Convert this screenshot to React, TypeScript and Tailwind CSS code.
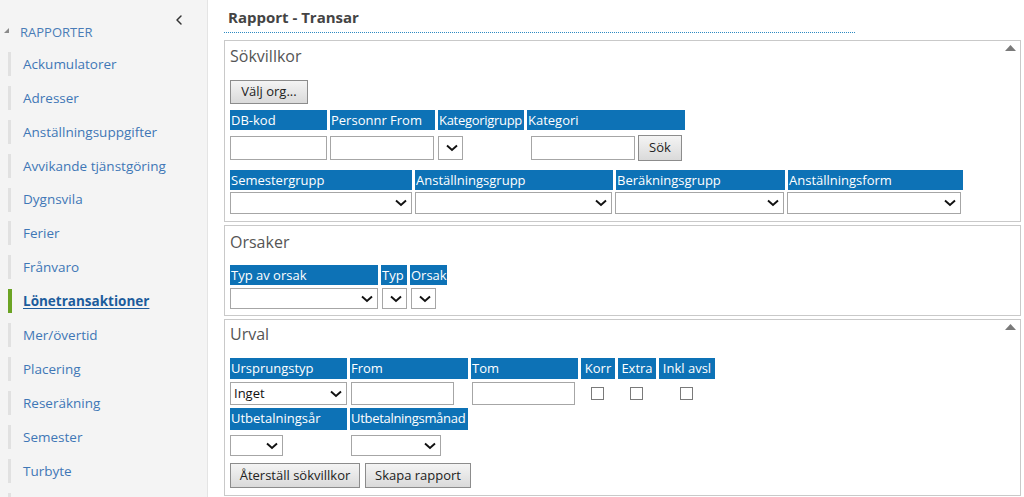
import { ChevronLeft } from "lucide-react"

const navItems = [
  "Ackumulatorer",
  "Adresser",
  "Anställningsuppgifter",
  "Avvikande tjänstgöring",
  "Dygnsvila",
  "Ferier",
  "Frånvaro",
  "Lönetransaktioner",
  "Mer/övertid",
  "Placering",
  "Reseräkning",
  "Semester",
  "Turbyte",
  "",
]

function Chevron() {
  return (
    <svg width="12" height="8" viewBox="0 0 12 8" className="shrink-0">
      <path d="M1 1.5 L6 6 L11 1.5" fill="none" stroke="#111" strokeWidth="1.9" />
    </svg>
  )
}

function Select({ w, value }: { w: string; value?: string }) {
  return (
    <div
      className={`${w} h-full bg-white border border-[#a6a6a6] flex items-center justify-between pl-[3px] pr-[4px] text-[13px] text-[#111]`}
    >
      <span>{value}</span>
      <Chevron />
    </div>
  )
}

function Input({ w }: { w: string }) {
  return <div className={`${w} h-full bg-white border border-[#a6a6a6]`} />
}

function Head({ w, label, center, tight }: { w: string; label: string; center?: boolean; tight?: boolean }) {
  return (
    <div
      className={`${w} h-full bg-[#0d72b6] text-white text-[13px] leading-[20px] whitespace-nowrap ${center ? "text-center" : "pl-[1px]"} ${tight ? "tracking-[-0.3px]" : ""}`}
    >
      {label}
    </div>
  )
}

function Btn({ label, w }: { label: string; w: string }) {
  return (
    <div
      className={`${w} h-full flex items-center justify-center border border-[#8c8c8c] bg-gradient-to-b from-[#f4f4f4] to-[#dadada] text-[13px] text-[#222]`}
    >
      {label}
    </div>
  )
}

function Check() {
  return <div className="w-[13px] h-[13px] border border-[#7a7a7a] bg-white" />
}

function Panel({ title, pt, pb, children, collapse }: { title: string; pt: string; pb: string; children: React.ReactNode; collapse?: boolean }) {
  return (
    <div className={`relative border border-[#c9c9c9] pl-[5px] ${pt} ${pb}`}>
      {collapse && (
        <svg width="11" height="6" viewBox="0 0 11 6" className="absolute right-[4px] top-[4px]">
          <path d="M0 6 L5.5 0 L11 6 Z" fill="#7a7a7a" />
        </svg>
      )}
      <div className="text-base leading-[24px] text-[#555]">{title}</div>
      {children}
    </div>
  )
}

export default function App() {
  return (
    <div className="flex h-[497px] overflow-hidden bg-white" style={{ fontFamily: '"Open Sans", "Noto Sans", sans-serif' }}>
      {/* Sidebar */}
      <aside className="w-[208px] shrink-0 bg-[#f4f4f4] border-r border-[#e4e4e4]">
        <div className="flex justify-between items-start">
          <div className="flex items-center pt-[23px] pl-[4px] h-[41px]">
            <svg width="5" height="5" viewBox="0 0 5 5" className="mt-[-4px]">
              <path d="M5 0 L5 5 L0 5 Z" fill="#8a8a8a" />
            </svg>
            <span className="ml-[11px] text-[13px] leading-[18px] text-[#4a7cb7]">RAPPORTER</span>
          </div>
          <div className="pt-[12px] pr-[20px]">
            <ChevronLeft size={16} strokeWidth={2.2} color="#333" />
          </div>
        </div>
        <ul className="mt-[11px] pl-[8px]">
          {navItems.map((item, i) => {
            const active = item === "Lönetransaktioner"
            return (
              <li
                key={i}
                className={`h-[24px] mb-[9.9px] flex items-center text-[13.5px] ${
                  active
                    ? "border-l-[4px] border-[#6ba323] font-bold text-[#1c5c9c] underline underline-offset-2 pl-[11px]"
                    : "border-l-[3px] border-[#e1e1e1] text-[#3f77b6] pl-[12px]"
                }`}
              >
                {item}
              </li>
            )
          })}
        </ul>
      </aside>

      {/* Main */}
      <main className="flex-1 pl-[16px] pr-[3px]">
        <div className="w-[631px] pt-[7px] pb-[5px] border-b border-dotted border-[#2d8ac2]">
          <h1 className="pl-[4px] text-[15px] leading-[20px] font-bold text-[#444]">Rapport - Transar</h1>
        </div>

        <div className="mt-[7px] flex flex-col gap-[3px]">
          <Panel title="Sökvillkor" pt="pt-[3px]" pb="pb-[7px]" collapse>
            <div className="mt-[12px] h-[24px] flex">
              <Btn label="Välj org..." w="w-[78px]" />
            </div>
            <div className="mt-[6px] h-[20px] flex gap-[3px]">
              <Head w="w-[97px]" label="DB-kod" />
              <Head w="w-[105px]" label="Personnr From" />
              <Head w="w-[86px]" label="Kategorigrupp" tight />
              <Head w="w-[158px]" label="Kategori" />
            </div>
            <div className="mt-[5px] h-[26px] flex items-center">
              <div className="h-[24px] flex">
                <Input w="w-[97px]" />
                <div className="w-[3px]" />
                <Input w="w-[104px]" />
                <div className="w-[4px]" />
                <Select w="w-[25px]" />
                <div className="w-[68px]" />
                <Input w="w-[104px]" />
              </div>
              <div className="ml-[3px] h-[26px] flex">
                <Btn label="Sök" w="w-[44px]" />
              </div>
            </div>
            <div className="mt-[9px] h-[20px] flex gap-[3px]">
              <Head w="w-[182px]" label="Semestergrupp" />
              <Head w="w-[198px]" label="Anställningsgrupp" />
              <Head w="w-[169px]" label="Beräkningsgrupp" />
              <Head w="w-[175px]" label="Anställningsform" />
            </div>
            <div className="mt-[2px] h-[22px] flex gap-[3px]">
              <Select w="w-[182px]" />
              <Select w="w-[197px]" />
              <Select w="w-[169px]" />
              <Select w="w-[174px]" />
            </div>
          </Panel>

          <Panel title="Orsaker" pt="pt-[4px]" pb="pb-[6px]">
            <div className="mt-[11px] h-[20px] flex gap-[3px]">
              <Head w="w-[148px]" label="Typ av orsak" />
              <Head w="w-[26px]" label="Typ" />
              <Head w="w-[37px]" label="Orsak" />
            </div>
            <div className="mt-[3px] h-[21px] flex gap-[4px]">
              <Select w="w-[148px]" />
              <Select w="w-[25px]" />
              <Select w="w-[25px]" />
            </div>
          </Panel>

          <Panel title="Urval" pt="pt-[2px]" pb="pb-[7px]" collapse>
            <div className="mt-[12px] h-[21px] flex gap-[3px]">
              <Head w="w-[117px]" label="Ursprungstyp" />
              <Head w="w-[118px]" label="From" />
              <Head w="w-[107px]" label="Tom" />
              <Head w="w-[34px]" label="Korr" center />
              <Head w="w-[38px]" label="Extra" center />
              <Head w="w-[56px]" label="Inkl avsl" center />
            </div>
            <div className="mt-[3px] h-[23px] flex">
              <Select w="w-[117px]" value="Inget" />
              <div className="w-[4px]" />
              <Input w="w-[103px]" />
              <div className="w-[18px]" />
              <Input w="w-[103px]" />
              <div className="w-[5px] shrink-0" />
              <div className="w-[34px] flex items-center justify-center"><Check /></div>
              <div className="w-[3px]" />
              <div className="w-[38px] flex items-center justify-center"><Check /></div>
              <div className="w-[3px]" />
              <div className="w-[56px] flex items-center justify-center"><Check /></div>
            </div>
            <div className="mt-[3px] h-[22px] flex gap-[3px]">
              <Head w="w-[117px]" label="Utbetalningsår" />
              <Head w="w-[118px]" label="Utbetalningsmånad" tight />
            </div>
            <div className="mt-[5px] h-[21px] flex">
              <Select w="w-[53px]" />
              <div className="w-[68px]" />
              <Select w="w-[90px]" />
            </div>
            <div className="mt-[7px] h-[25px] flex gap-[5px]">
              <Btn label="Återställ sökvillkor" w="w-[130px]" />
              <Btn label="Skapa rapport" w="w-[106px]" />
            </div>
          </Panel>
        </div>
      </main>
    </div>
  )
}
